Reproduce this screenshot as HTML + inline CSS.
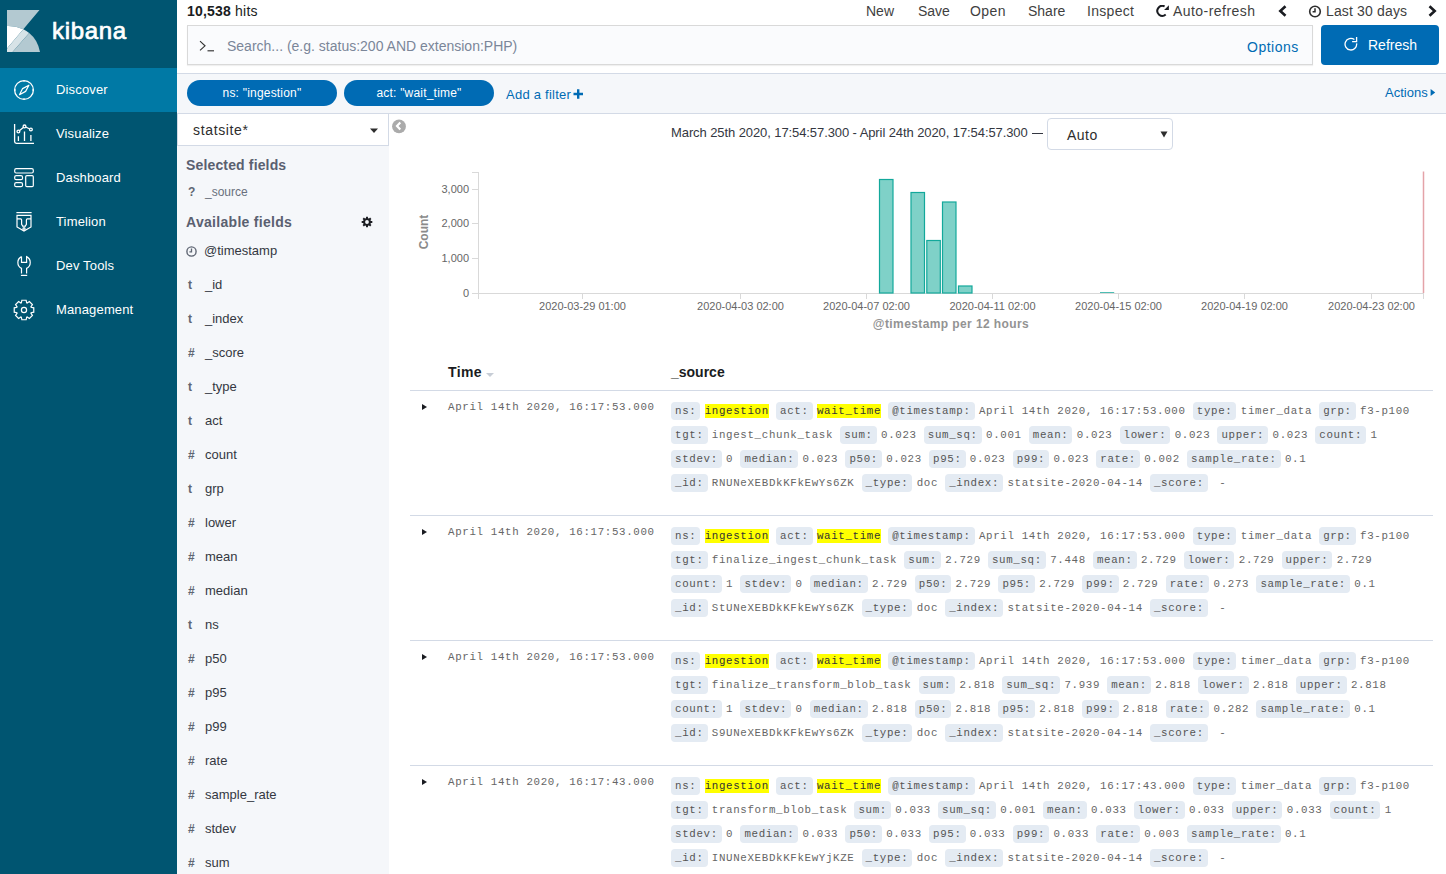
<!DOCTYPE html>
<html><head><meta charset="utf-8">
<style>
*{box-sizing:border-box;margin:0;padding:0}
html,body{width:1446px;height:874px;overflow:hidden;background:#fff;font-family:"Liberation Sans",sans-serif;color:#3f3f3f}
.abs{position:absolute}
.t{position:absolute;white-space:nowrap;line-height:1}
#nav{position:absolute;left:0;top:0;width:177px;height:874px;background:#005571}
.ni{position:absolute;left:0;width:177px;height:44px}
.ni.on{background:#0079a5}
.ni svg{position:absolute;left:8px;top:6px}
.ni span{position:absolute;left:56px;top:15px;font-size:13px;line-height:13px;color:#fff;white-space:nowrap;letter-spacing:0.15px}
.menu{position:absolute;top:4px;font-size:14px;line-height:14px;color:#3f3f3f;white-space:nowrap}
.fld{position:absolute;left:177px;width:212px;height:34px}
.fld i{position:absolute;left:11px;top:11px;font-style:normal;font-weight:bold;font-size:12px;line-height:12px;color:#5f6673}
.fld span{position:absolute;left:28px;top:10px;font-size:13px;line-height:13px;color:#343741;letter-spacing:-0.2px}
.ln{position:absolute;left:671px;height:18px;white-space:pre;font-family:"Liberation Mono",monospace;font-size:10.8px;letter-spacing:0.648px;line-height:18px;color:#666}
.k{display:inline-block;vertical-align:top;height:18px;padding:0 4px;margin-right:4.35px;background:#e4ebf3;border-radius:4px;color:#555}
.hl{display:inline-block;vertical-align:top;margin-top:2px;height:14px;line-height:14px;background:#ffff00;color:#333}
.tm{position:absolute;left:448px;font-family:"Liberation Mono",monospace;font-size:10.8px;letter-spacing:0.648px;line-height:14px;color:#666;white-space:pre}
.arr{position:absolute;left:422px;width:0;height:0;border-top:3.6px solid transparent;border-bottom:3.6px solid transparent;border-left:5.2px solid #1a1c21}
.sep{position:absolute;left:410px;width:1023px;height:1px;background:#d3dae6}
.xl{position:absolute;top:300px;font-size:11px;line-height:11px;color:#666;white-space:nowrap}
.yl{position:absolute;font-size:11px;line-height:11px;color:#666;white-space:nowrap;text-align:right;width:40px;left:429px}
</style></head><body>
<div id="nav">
  <svg class="abs" style="left:7px;top:10px" width="33" height="42" viewBox="0 0 33 42">
    <path d="M0 0 H32.5 L16.3 19.3 Q8 15.6 0 16 Z" fill="#b3c9d1"/>
    <path d="M0 16 Q8 15.6 16.3 19.3 L0 38.5 Z" fill="#ffffff"/>
    <path d="M16.3 19.3 Q19.5 20.9 22.2 22.9 L5.6 42 H0 V38.5 Z" fill="#d7e3e7"/>
    <path d="M22.2 22.9 Q31 30 33 42 H5.6 Z" fill="#b3c9d1"/>
  </svg>
  <div class="t" style="left:52px;top:19px;font-size:24px;line-height:24px;color:#fff;-webkit-text-stroke:0.7px #fff;letter-spacing:0.7px">kibana</div>
  <div class="ni on" style="top:68px"><svg width="32" height="32" viewBox="0 0 32 32" fill="none" stroke="#fff" stroke-width="1.3">
    <circle cx="16" cy="16" r="9.4"/><path d="M16 6.6 V8 M16 24 V25.4 M6.6 16 H8 M24 16 H25.4" stroke-width="1"/><path d="M11.5 20.7 L14.6 14.6 L20.9 11.2 L17.6 17.4 Z" stroke-width="1.2" stroke-linejoin="round"/></svg><span>Discover</span></div>
  <div class="ni" style="top:112px"><svg width="32" height="32" viewBox="0 0 32 32" fill="none" stroke="#fff" stroke-width="1.3">
    <path d="M6.6 6 V23.5 Q6.6 25.3 8.4 25.3 H26"/><path d="M10.4 13.5 L16.5 8.4 L22.9 11.5"/>
    <circle cx="10.4" cy="13.5" r="1.4" fill="#005571"/><circle cx="16.5" cy="8.4" r="1.4" fill="#005571"/><circle cx="22.9" cy="11.5" r="1.4" fill="#005571"/>
    <path d="M10.4 18.3 V22.9 M16.5 13.6 V22.9 M22.9 17 V22.9"/></svg><span>Visualize</span></div>
  <div class="ni" style="top:156px"><svg width="32" height="32" viewBox="0 0 32 32" fill="none" stroke="#fff" stroke-width="1.2">
    <rect x="6.7" y="6.7" width="18.6" height="4.3" rx="1.5"/><rect x="6.7" y="13.6" width="7.8" height="4.1" rx="1.5"/>
    <rect x="6.7" y="20.6" width="7.8" height="4.1" rx="1.5"/><rect x="17.7" y="13.6" width="7.6" height="11.1" rx="1.2"/></svg><span>Dashboard</span></div>
  <div class="ni" style="top:200px"><svg width="32" height="32" viewBox="0 0 32 32" fill="none" stroke="#fff" stroke-width="1.2">
    <path d="M8.4 6.6 H23.6"/><path d="M9 9.3 H23 V21 L16 25 L9 21 Z"/><path d="M9 12.9 H12.6 Q13.6 12.9 13.6 14 V18.3 L15.6 21.4 M16.4 21.4 L18.4 18.3 V14 Q18.4 12.9 19.4 12.9 H23"/><circle cx="16" cy="23" r="1.1"/><circle cx="16" cy="19.6" r="0.7" fill="#fff" stroke="none" opacity="0.6"/></svg><span>Timelion</span></div>
  <div class="ni" style="top:244px"><svg width="32" height="32" viewBox="0 0 32 32" fill="none" stroke="#fff" stroke-width="1.2">
    <path d="M13.5 6.6 V12.4 H18.6 V6.6 A6.6 6.6 0 0 1 18.6 18.4 V23.4 M13.5 23.4 V18.4 A6.6 6.6 0 0 1 13.5 6.6"/><path d="M12.9 25.4 H19.2"/></svg><span>Dev Tools</span></div>
  <div class="ni" style="top:288px"><svg width="32" height="32" viewBox="0 0 32 32" fill="none" stroke="#fff" stroke-width="1.2">
    <path d="M13.32 8.89 L13.86 6.23 L18.14 6.23 L18.68 8.89 L19.14 9.08 L21.39 7.58 L24.42 10.61 L22.92 12.86 L23.11 13.32 L25.77 13.86 L25.77 18.14 L23.11 18.68 L22.92 19.14 L24.42 21.39 L21.39 24.42 L19.14 22.92 L18.68 23.11 L18.14 25.77 L13.86 25.77 L13.32 23.11 L12.86 22.92 L10.61 24.42 L7.58 21.39 L9.08 19.14 L8.89 18.68 L6.23 18.14 L6.23 13.86 L8.89 13.32 L9.08 12.86 L7.58 10.61 L10.61 7.58 L12.86 9.08Z"/>
    <circle cx="16" cy="16" r="2.6"/></svg><span>Management</span></div>
</div>

<!-- top bar -->
<div class="t" style="left:187px;top:4px;font-size:14px;line-height:14px;color:#1a1c21;letter-spacing:0.2px"><b>10,538</b> hits</div>
<div class="menu" style="left:866px">New</div>
<div class="menu" style="left:918px">Save</div>
<div class="menu" style="left:970px;letter-spacing:0.4px">Open</div>
<div class="menu" style="left:1028px">Share</div>
<div class="menu" style="left:1087px;letter-spacing:0.3px">Inspect</div>
<svg class="abs" style="left:1156px;top:5px" width="14" height="13" viewBox="0 0 14 13"><path d="M8.6 1.4 A5 5 0 1 0 9.7 9.6" fill="none" stroke="#1a1c21" stroke-width="2"/><path d="M12.9 0.3 V4.9 H8.1 Z" fill="#1a1c21"/></svg>
<div class="menu" style="left:1173px;letter-spacing:0.45px">Auto-refresh</div>
<svg class="abs" style="left:1277px;top:5px" width="11" height="12" viewBox="0 0 11 12"><path d="M8.5 1.2 L3.3 6 L8.5 10.8" fill="none" stroke="#1a1c21" stroke-width="2.6"/></svg>
<svg class="abs" style="left:1308px;top:5px" width="14" height="13" viewBox="0 0 14 13"><circle cx="7" cy="6.5" r="5.3" fill="none" stroke="#2d2d2d" stroke-width="1.6"/><path d="M7 3.3 V6.8 H4.6" fill="none" stroke="#2d2d2d" stroke-width="1.5"/></svg>
<div class="menu" style="left:1326px;letter-spacing:0.15px">Last 30 days</div>
<svg class="abs" style="left:1427px;top:5px" width="11" height="12" viewBox="0 0 11 12"><path d="M2.5 1.2 L7.7 6 L2.5 10.8" fill="none" stroke="#1a1c21" stroke-width="2.6"/></svg>

<!-- search -->
<div class="abs" style="left:187px;top:25px;width:1126px;height:40px;background:#fafbfd;border:1px solid #d9d9d9;box-shadow:0 1px 1px rgba(0,0,0,0.06)"></div>
<svg class="abs" style="left:199px;top:40px" width="16" height="12" viewBox="0 0 16 12"><path d="M1 1.2 L6 5.8 L1 10.4" fill="none" stroke="#333" stroke-width="1.15"/><path d="M8.5 10.8 H15" stroke="#333" stroke-width="1.15"/></svg>
<div class="t" style="left:227px;top:39px;font-size:14px;line-height:14px;color:#7b8699">Search... (e.g. status:200 AND extension:PHP)</div>
<div class="t" style="left:1247px;top:40px;font-size:14px;line-height:14px;color:#006bb4;letter-spacing:0.5px">Options</div>
<div class="abs" style="left:1321px;top:25px;width:118px;height:40px;background:#006bb4;border-radius:4px"></div>
<svg class="abs" style="left:1344px;top:35.3px" width="15" height="16" viewBox="0 0 15 16"><path d="M10.4 4.6 A5.8 5.8 0 1 0 12.6 8.4" fill="none" stroke="#fff" stroke-width="1.3"/><path d="M12.6 2 V6.6 H8.1" fill="none" stroke="#fff" stroke-width="1.3"/></svg>
<div class="t" style="left:1368px;top:38px;font-size:14px;line-height:14px;color:#fff">Refresh</div>

<!-- filter bar -->
<div class="abs" style="left:177px;top:73px;width:1269px;height:41px;background:#f5f7fa;border-top:1px solid #d3dae6;border-bottom:1px solid #d3dae6"></div>
<div class="abs" style="left:187px;top:80px;width:150px;height:26px;border-radius:13px;background:#006bb4"></div>
<div class="t" style="left:187px;top:87px;width:150px;text-align:center;font-size:12px;line-height:12px;color:#fff;letter-spacing:0.2px">ns: "ingestion"</div>
<div class="abs" style="left:344px;top:80px;width:150px;height:26px;border-radius:13px;background:#006bb4"></div>
<div class="t" style="left:344px;top:87px;width:150px;text-align:center;font-size:12px;line-height:12px;color:#fff;letter-spacing:0.2px">act: "wait_time"</div>
<div class="t" style="left:506px;top:88px;font-size:13px;line-height:13px;color:#006bb4;letter-spacing:0.25px">Add a filter</div>
<svg class="abs" style="left:573px;top:89px" width="10.5" height="10" viewBox="0 0 10.5 10"><path d="M5.2 0.3 V9.7 M0.5 5 H10" stroke="#006bb4" stroke-width="2.4"/></svg>
<div class="t" style="left:1385px;top:86px;font-size:13px;line-height:13px;color:#006bb4">Actions</div>
<svg class="abs" style="left:1430px;top:88px" width="6" height="9" viewBox="0 0 6 9"><path d="M0.6 1 L5.2 4.5 L0.6 8 Z" fill="#006bb4"/></svg>

<!-- field sidebar -->
<div class="abs" style="left:177px;top:115px;width:212px;height:759px;background:#f5f7fa"></div>
<div class="abs" style="left:177px;top:114px;width:212px;height:32px;background:#fff;border-bottom:1px solid #d3dae6;border-left:1px solid #d3dae6;border-right:1px solid #d3dae6"></div>
<div class="t" style="left:193px;top:123px;font-size:14px;line-height:14px;color:#2d2d2d;letter-spacing:0.65px">statsite*</div>
<svg class="abs" style="left:369px;top:128px" width="10" height="6" viewBox="0 0 10 6"><path d="M1 0.5 H9 L5 5 Z" fill="#2d2d2d"/></svg>
<svg class="abs" style="left:391px;top:118px" width="16" height="16" viewBox="0 0 16 16"><circle cx="8" cy="8.4" r="6.9" fill="#ababab"/><path d="M9.3 4.5 L6 8 L9.3 11.5" fill="none" stroke="#fff" stroke-width="2.2"/></svg>
<div class="t" style="left:186px;top:158px;font-size:14px;line-height:14px;font-weight:bold;color:#5a6070;letter-spacing:0.15px">Selected fields</div>
<div class="t" style="left:188px;top:186px;font-size:12px;line-height:12px;font-weight:bold;color:#5f6673">?</div>
<div class="t" style="left:205px;top:186px;font-size:12px;line-height:12px;color:#69707d">_source</div>
<div class="t" style="left:186px;top:215px;font-size:14px;line-height:14px;font-weight:bold;color:#5a6070;letter-spacing:0.3px">Available fields</div>
<svg class="abs" style="left:361px;top:215.6px" width="12" height="12" viewBox="0 0 12 12"><path d="M9.87 4.97 L11.32 5.09 L11.32 6.91 L9.87 7.03 L9.46 8.01 L10.41 9.12 L9.12 10.41 L8.01 9.46 L7.03 9.87 L6.91 11.32 L5.09 11.32 L4.97 9.87 L3.99 9.46 L2.88 10.41 L1.59 9.12 L2.54 8.01 L2.13 7.03 L0.68 6.91 L0.68 5.09 L2.13 4.97 L2.54 3.99 L1.59 2.88 L2.88 1.59 L3.99 2.54 L4.97 2.13 L5.09 0.68 L6.91 0.68 L7.03 2.13 L8.01 2.54 L9.12 1.59 L10.41 2.88 L9.46 3.99Z M6 4.1 A1.9 1.9 0 1 0 6 7.9 A1.9 1.9 0 1 0 6 4.1Z" fill="#1a1c21" fill-rule="evenodd"/></svg>
<svg class="abs" style="left:186px;top:246px" width="11" height="11" viewBox="0 0 11 11"><circle cx="5.5" cy="5.5" r="4.6" fill="none" stroke="#5f6673" stroke-width="1.4"/><path d="M5.5 2.6 V5.8 H3.4" fill="none" stroke="#5f6673" stroke-width="1.3"/></svg>
<div class="t" style="left:204px;top:244px;font-size:13px;line-height:13px;color:#343741">@timestamp</div>
<div class="t" style="left:188px;top:279px;font-size:12px;line-height:12px;font-weight:bold;color:#5f6673">t</div>
<div class="t" style="left:205px;top:278px;font-size:13px;line-height:13px;color:#343741">_id</div>
<div class="t" style="left:188px;top:313px;font-size:12px;line-height:12px;font-weight:bold;color:#5f6673">t</div>
<div class="t" style="left:205px;top:312px;font-size:13px;line-height:13px;color:#343741">_index</div>
<div class="t" style="left:188px;top:347px;font-size:12px;line-height:12px;font-weight:bold;color:#5f6673">#</div>
<div class="t" style="left:205px;top:346px;font-size:13px;line-height:13px;color:#343741">_score</div>
<div class="t" style="left:188px;top:381px;font-size:12px;line-height:12px;font-weight:bold;color:#5f6673">t</div>
<div class="t" style="left:205px;top:380px;font-size:13px;line-height:13px;color:#343741">_type</div>
<div class="t" style="left:188px;top:415px;font-size:12px;line-height:12px;font-weight:bold;color:#5f6673">t</div>
<div class="t" style="left:205px;top:414px;font-size:13px;line-height:13px;color:#343741">act</div>
<div class="t" style="left:188px;top:449px;font-size:12px;line-height:12px;font-weight:bold;color:#5f6673">#</div>
<div class="t" style="left:205px;top:448px;font-size:13px;line-height:13px;color:#343741">count</div>
<div class="t" style="left:188px;top:483px;font-size:12px;line-height:12px;font-weight:bold;color:#5f6673">t</div>
<div class="t" style="left:205px;top:482px;font-size:13px;line-height:13px;color:#343741">grp</div>
<div class="t" style="left:188px;top:517px;font-size:12px;line-height:12px;font-weight:bold;color:#5f6673">#</div>
<div class="t" style="left:205px;top:516px;font-size:13px;line-height:13px;color:#343741">lower</div>
<div class="t" style="left:188px;top:551px;font-size:12px;line-height:12px;font-weight:bold;color:#5f6673">#</div>
<div class="t" style="left:205px;top:550px;font-size:13px;line-height:13px;color:#343741">mean</div>
<div class="t" style="left:188px;top:585px;font-size:12px;line-height:12px;font-weight:bold;color:#5f6673">#</div>
<div class="t" style="left:205px;top:584px;font-size:13px;line-height:13px;color:#343741">median</div>
<div class="t" style="left:188px;top:619px;font-size:12px;line-height:12px;font-weight:bold;color:#5f6673">t</div>
<div class="t" style="left:205px;top:618px;font-size:13px;line-height:13px;color:#343741">ns</div>
<div class="t" style="left:188px;top:653px;font-size:12px;line-height:12px;font-weight:bold;color:#5f6673">#</div>
<div class="t" style="left:205px;top:652px;font-size:13px;line-height:13px;color:#343741">p50</div>
<div class="t" style="left:188px;top:687px;font-size:12px;line-height:12px;font-weight:bold;color:#5f6673">#</div>
<div class="t" style="left:205px;top:686px;font-size:13px;line-height:13px;color:#343741">p95</div>
<div class="t" style="left:188px;top:721px;font-size:12px;line-height:12px;font-weight:bold;color:#5f6673">#</div>
<div class="t" style="left:205px;top:720px;font-size:13px;line-height:13px;color:#343741">p99</div>
<div class="t" style="left:188px;top:755px;font-size:12px;line-height:12px;font-weight:bold;color:#5f6673">#</div>
<div class="t" style="left:205px;top:754px;font-size:13px;line-height:13px;color:#343741">rate</div>
<div class="t" style="left:188px;top:789px;font-size:12px;line-height:12px;font-weight:bold;color:#5f6673">#</div>
<div class="t" style="left:205px;top:788px;font-size:13px;line-height:13px;color:#343741">sample_rate</div>
<div class="t" style="left:188px;top:823px;font-size:12px;line-height:12px;font-weight:bold;color:#5f6673">#</div>
<div class="t" style="left:205px;top:822px;font-size:13px;line-height:13px;color:#343741">stdev</div>
<div class="t" style="left:188px;top:857px;font-size:12px;line-height:12px;font-weight:bold;color:#5f6673">#</div>
<div class="t" style="left:205px;top:856px;font-size:13px;line-height:13px;color:#343741">sum</div>

<div class="t" style="left:671px;top:126px;font-size:13px;line-height:13px;color:#343741;letter-spacing:-0.09px" id="daterange">March 25th 2020, 17:54:57.300 - April 24th 2020, 17:54:57.300</div><div class="abs" style="left:1031.5px;top:132.5px;width:11.2px;height:1.1px;background:#343741"></div>
<div class="abs" style="left:1047px;top:118px;width:126px;height:32px;border:1px solid #d3dae6;border-radius:4px;background:#fff"></div>
<div class="t" style="left:1067px;top:128px;font-size:14px;line-height:14px;color:#2d2d2d;letter-spacing:0.5px">Auto</div>
<svg class="abs" style="left:1160px;top:131px" width="8" height="7" viewBox="0 0 8 7"><path d="M0.5 0.5 H7.5 L4 6.5 Z" fill="#2d2d2d"/></svg>
<svg class="abs" style="left:400px;top:160px" width="1046" height="180" viewBox="400 160 1046 180">
<path d="M478.5 172 V299 M472 172.5 H478 M472 189.5 H478 M472 223.5 H478 M472 258.5 H478 M472 293.5 H1424" stroke="#d9d9d9" stroke-width="1" fill="none"/>
<path d="M582.5 293 V299" stroke="#d9d9d9" stroke-width="1"/>
<path d="M740.5 293 V299" stroke="#d9d9d9" stroke-width="1"/>
<path d="M866.5 293 V299" stroke="#d9d9d9" stroke-width="1"/>
<path d="M992.5 293 V299" stroke="#d9d9d9" stroke-width="1"/>
<path d="M1118.5 293 V299" stroke="#d9d9d9" stroke-width="1"/>
<path d="M1244.5 293 V299" stroke="#d9d9d9" stroke-width="1"/>
<path d="M1371.5 293 V299" stroke="#d9d9d9" stroke-width="1"/>
<path d="M1423.5 293 V299" stroke="#d9d9d9" stroke-width="1"/>
<rect x="879.5" y="179.5" width="13.5" height="113.5" fill="#7fd1c8" stroke="#13a89b" stroke-width="1.2"/>
<rect x="911.0" y="192.5" width="13.5" height="100.5" fill="#7fd1c8" stroke="#13a89b" stroke-width="1.2"/>
<rect x="926.8" y="240.5" width="13.5" height="52.5" fill="#7fd1c8" stroke="#13a89b" stroke-width="1.2"/>
<rect x="942.5" y="202.0" width="13.5" height="91.0" fill="#7fd1c8" stroke="#13a89b" stroke-width="1.2"/>
<rect x="958.5" y="286.0" width="13.5" height="7.0" fill="#7fd1c8" stroke="#13a89b" stroke-width="1.2"/>
<rect x="1100" y="292" width="14.2" height="1" fill="#4dbdb3"/>
<path d="M1423.5 171.5 V293" stroke="#e4a3a8" stroke-width="1.5"/>
</svg>
<div class="yl" style="top:184px">3,000</div>
<div class="yl" style="top:218px">2,000</div>
<div class="yl" style="top:253px">1,000</div>
<div class="yl" style="top:288px">0</div>
<div class="t" style="left:406px;top:226px;width:36px;text-align:center;font-size:12px;line-height:12px;font-weight:bold;color:#8a8a8a;transform:rotate(-90deg)">Count</div>
<div class="xl" style="left:522.5px;top:301px;width:120px;text-align:center">2020-03-29 01:00</div>
<div class="xl" style="left:680.5px;top:301px;width:120px;text-align:center">2020-04-03 02:00</div>
<div class="xl" style="left:806.5px;top:301px;width:120px;text-align:center">2020-04-07 02:00</div>
<div class="xl" style="left:932.5px;top:301px;width:120px;text-align:center">2020-04-11 02:00</div>
<div class="xl" style="left:1058.5px;top:301px;width:120px;text-align:center">2020-04-15 02:00</div>
<div class="xl" style="left:1184.5px;top:301px;width:120px;text-align:center">2020-04-19 02:00</div>
<div class="xl" style="left:1311.5px;top:301px;width:120px;text-align:center">2020-04-23 02:00</div>
<div class="t" style="left:851px;top:318px;width:200px;text-align:center;font-size:12px;line-height:12px;font-weight:bold;color:#939393;letter-spacing:0.4px">@timestamp per 12 hours</div>

<div class="t" style="left:448px;top:365px;font-size:14px;line-height:14px;font-weight:bold;color:#1a1c21;letter-spacing:0.4px">Time</div>
<svg class="abs" style="left:485px;top:372px" width="10" height="6" viewBox="0 0 10 6"><path d="M1 1 H9 L5 5 Z" fill="#c7cdd6"/></svg>
<div class="t" style="left:671px;top:365px;font-size:14px;line-height:14px;font-weight:bold;color:#1a1c21">_source</div>
<div class="sep" style="top:390px"></div>
<div class="arr" style="top:403.8px"></div>
<div class="tm" style="top:400px">April 14th 2020, 16:17:53.000</div>
<div class="ln" style="top:402px"><span class="k">ns:</span><span class="hl">ingestion</span> <span class="k">act:</span><span class="hl">wait_time</span> <span class="k">@timestamp:</span>April 14th 2020, 16:17:53.000 <span class="k">type:</span>timer_data <span class="k">grp:</span>f3-p100</div>
<div class="ln" style="top:426px"><span class="k">tgt:</span>ingest_chunk_task <span class="k">sum:</span>0.023 <span class="k">sum_sq:</span>0.001 <span class="k">mean:</span>0.023 <span class="k">lower:</span>0.023 <span class="k">upper:</span>0.023 <span class="k">count:</span>1</div>
<div class="ln" style="top:450px"><span class="k">stdev:</span>0 <span class="k">median:</span>0.023 <span class="k">p50:</span>0.023 <span class="k">p95:</span>0.023 <span class="k">p99:</span>0.023 <span class="k">rate:</span>0.002 <span class="k">sample_rate:</span>0.1</div>
<div class="ln" style="top:474px"><span class="k">_id:</span>RNUNeXEBDkKFkEwYs6ZK <span class="k">_type:</span>doc <span class="k">_index:</span>statsite-2020-04-14 <span class="k">_score:</span> -</div>
<div class="sep" style="top:515px"></div>
<div class="arr" style="top:528.8px"></div>
<div class="tm" style="top:525px">April 14th 2020, 16:17:53.000</div>
<div class="ln" style="top:527px"><span class="k">ns:</span><span class="hl">ingestion</span> <span class="k">act:</span><span class="hl">wait_time</span> <span class="k">@timestamp:</span>April 14th 2020, 16:17:53.000 <span class="k">type:</span>timer_data <span class="k">grp:</span>f3-p100</div>
<div class="ln" style="top:551px"><span class="k">tgt:</span>finalize_ingest_chunk_task <span class="k">sum:</span>2.729 <span class="k">sum_sq:</span>7.448 <span class="k">mean:</span>2.729 <span class="k">lower:</span>2.729 <span class="k">upper:</span>2.729</div>
<div class="ln" style="top:575px"><span class="k">count:</span>1 <span class="k">stdev:</span>0 <span class="k">median:</span>2.729 <span class="k">p50:</span>2.729 <span class="k">p95:</span>2.729 <span class="k">p99:</span>2.729 <span class="k">rate:</span>0.273 <span class="k">sample_rate:</span>0.1</div>
<div class="ln" style="top:599px"><span class="k">_id:</span>StUNeXEBDkKFkEwYs6ZK <span class="k">_type:</span>doc <span class="k">_index:</span>statsite-2020-04-14 <span class="k">_score:</span> -</div>
<div class="sep" style="top:640px"></div>
<div class="arr" style="top:653.8px"></div>
<div class="tm" style="top:650px">April 14th 2020, 16:17:53.000</div>
<div class="ln" style="top:652px"><span class="k">ns:</span><span class="hl">ingestion</span> <span class="k">act:</span><span class="hl">wait_time</span> <span class="k">@timestamp:</span>April 14th 2020, 16:17:53.000 <span class="k">type:</span>timer_data <span class="k">grp:</span>f3-p100</div>
<div class="ln" style="top:676px"><span class="k">tgt:</span>finalize_transform_blob_task <span class="k">sum:</span>2.818 <span class="k">sum_sq:</span>7.939 <span class="k">mean:</span>2.818 <span class="k">lower:</span>2.818 <span class="k">upper:</span>2.818</div>
<div class="ln" style="top:700px"><span class="k">count:</span>1 <span class="k">stdev:</span>0 <span class="k">median:</span>2.818 <span class="k">p50:</span>2.818 <span class="k">p95:</span>2.818 <span class="k">p99:</span>2.818 <span class="k">rate:</span>0.282 <span class="k">sample_rate:</span>0.1</div>
<div class="ln" style="top:724px"><span class="k">_id:</span>S9UNeXEBDkKFkEwYs6ZK <span class="k">_type:</span>doc <span class="k">_index:</span>statsite-2020-04-14 <span class="k">_score:</span> -</div>
<div class="sep" style="top:765px"></div>
<div class="arr" style="top:778.8px"></div>
<div class="tm" style="top:775px">April 14th 2020, 16:17:43.000</div>
<div class="ln" style="top:777px"><span class="k">ns:</span><span class="hl">ingestion</span> <span class="k">act:</span><span class="hl">wait_time</span> <span class="k">@timestamp:</span>April 14th 2020, 16:17:43.000 <span class="k">type:</span>timer_data <span class="k">grp:</span>f3-p100</div>
<div class="ln" style="top:801px"><span class="k">tgt:</span>transform_blob_task <span class="k">sum:</span>0.033 <span class="k">sum_sq:</span>0.001 <span class="k">mean:</span>0.033 <span class="k">lower:</span>0.033 <span class="k">upper:</span>0.033 <span class="k">count:</span>1</div>
<div class="ln" style="top:825px"><span class="k">stdev:</span>0 <span class="k">median:</span>0.033 <span class="k">p50:</span>0.033 <span class="k">p95:</span>0.033 <span class="k">p99:</span>0.033 <span class="k">rate:</span>0.003 <span class="k">sample_rate:</span>0.1</div>
<div class="ln" style="top:849px"><span class="k">_id:</span>INUNeXEBDkKFkEwYjKZE <span class="k">_type:</span>doc <span class="k">_index:</span>statsite-2020-04-14 <span class="k">_score:</span> -</div>

</body></html>
